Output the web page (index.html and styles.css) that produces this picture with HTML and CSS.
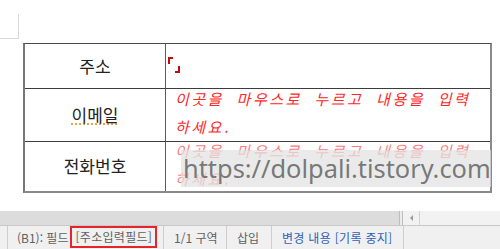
FILE: index.html
```html
<!DOCTYPE html>
<html lang="ko">
<head>
<meta charset="utf-8">
<title>표 필드</title>
<link rel="stylesheet" href="styles.css">
</head>
<body>
<div class="app">
  <div class="page">
    <div class="corner"></div>
    <div class="table">
      <div class="cell label">주소</div>
      <div class="cell value">
        <svg class="field" width="12" height="16" viewBox="0 0 12 16">
          <path d="M1 7 V1 H5" fill="none" stroke="#c40c0c" stroke-width="2"/>
          <path d="M11 9 V15 H7" fill="none" stroke="#c40c0c" stroke-width="2"/>
        </svg>
      </div>
      <div class="cell label"><span class="spell">이메일</span></div>
      <div class="cell value">
        <div class="hint">
          <span class="line">이곳을 마우스로 누르고 내용을 입력</span>
          <span class="line">하세요.</span>
        </div>
      </div>
      <div class="cell label last">전화번호</div>
      <div class="cell value last">
        <div class="hint faded">
          <span class="line">이곳을 마우스로 누르고 내용을 입력</span>
          <span class="line">하세요.</span>
        </div>
      </div>
    </div>
    <div class="watermark">https://dolpali.tistory.com</div>
  </div>
  <div class="hscroll">
    <div class="track"></div>
    <div class="grip"></div>
    <div class="sbtn"><span class="arrow"></span></div>
    <div class="rest"></div>
  </div>
  <div class="status">
    <div class="sitem first"></div>
    <div class="sitem field-info">(B1): 필드 <span class="boxed">[주소입력필드]</span></div>
    <div class="sitem sec">1/1 구역</div>
    <div class="sitem ins">삽입</div>
    <div class="sitem track-changes">변경 내용 [기록 중지]</div>
    <div class="sitem fill"></div>
  </div>
</div>
</body>
</html>
```

FILE: styles.css
```css
* { box-sizing: border-box; }
html, body {
  margin: 0;
  padding: 0;
  background: #ffffff;
}
body {
  width: 500px;
  height: 249px;
  overflow: hidden;
  font-family: "Noto Sans CJK KR", "Noto Sans", sans-serif;
}
.app {
  width: 500px;
  height: 249px;
  display: flex;
  flex-direction: column;
}
.page {
  position: relative;
  height: 211px;
  padding-top: 14px;
  background: #ffffff;
}
.corner {
  width: 19px;
  height: 25px;
  border-right: 1px solid #d9d9d9;
  border-bottom: 1px solid #d9d9d9;
}
.table {
  margin-top: 4px;
  margin-left: 23px;
  width: 469px;
  display: grid;
  grid-template-columns: 141px 1fr;
  grid-template-rows: 45px 53px 49px;
  border-top: 1px solid #4a4a4a;
  border-left: 2px solid #777777;
  border-right: 2px solid #8a8a8a;
  border-bottom: 2px solid #8a8a8a;
}
.cell {
  display: flex;
  align-items: center;
  border-bottom: 1px solid #3c3c3c;
  overflow: visible;
}
.cell.last { border-bottom: none; }
.label {
  justify-content: center;
  border-right: 1px solid #5a5a5a;
  font-size: 17px;
  color: #222222;
  padding-bottom: 2px;
}
.spell {
  text-decoration: underline dotted #f0a040;
  text-decoration-thickness: 2px;
  text-underline-offset: 2px;
}
.value { padding-left: 2px; }
.field {
  display: block;
  margin-bottom: 2px;
}
.hint {
  padding-left: 7px;
  margin-bottom: 4px;
  font-size: 15px;
  line-height: 28px;
  font-style: italic;
  letter-spacing: 2.5px;
  word-spacing: 6px;
  color: #ff2626;
  white-space: nowrap;
}
.hint.faded { color: #ff7a7a; }
.line { display: block; }
.watermark {
  position: absolute;
  left: 181px;
  top: 150px;
  width: 310px;
  height: 37px;
  padding-left: 2px;
  background: rgba(226, 226, 226, 0.72);
  color: rgba(105, 105, 105, 0.9);
  font-family: "Noto Sans", sans-serif;
  font-size: 25.4px;
  line-height: 37px;
  white-space: nowrap;
}
.hscroll {
  height: 15px;
  display: flex;
  border-bottom: 1px solid #c9c9c9;
  background: #dcdcdc;
}
.track {
  width: 399px;
  background: #dcdcdc;
}
.grip {
  width: 4px;
  border-left: 1px solid #bdbdbd;
  border-right: 1px solid #bdbdbd;
  background: #ececec;
}
.sbtn {
  width: 17px;
  background: #f2f2f2;
  border-right: 1px solid #d2d2d2;
  display: flex;
  align-items: center;
  justify-content: center;
}
.arrow {
  width: 0;
  height: 0;
  border-top: 3px solid transparent;
  border-bottom: 3px solid transparent;
  border-right: 3px solid #9a9a9a;
}
.rest {
  flex: 1;
  background: #f2f2f2;
}
.status {
  height: 23px;
  display: flex;
  background: #f0f0f0;
  font-size: 12px;
  color: #606060;
  white-space: nowrap;
}
.sitem {
  display: flex;
  align-items: center;
  border-right: 1px solid #cdcdcd;
}
.first { width: 8px; }
.field-info {
  width: 156px;
  padding-left: 9px;
}
.boxed {
  margin-left: 2px;
  padding: 2px 3px;
  border: 2px solid #e4262a;
  height: 22px;
  display: inline-flex;
  align-items: center;
  margin-top: -2px;
  letter-spacing: 0.3px;
}
.sec {
  width: 63px;
  padding-left: 10px;
}
.ins {
  width: 45px;
  padding-left: 10px;
}
.track-changes {
  width: 132px;
  padding-left: 10px;
  color: #2f5fb8;
  letter-spacing: 0.3px;
}
.fill {
  flex: 1;
  border-right: none;
}
```
